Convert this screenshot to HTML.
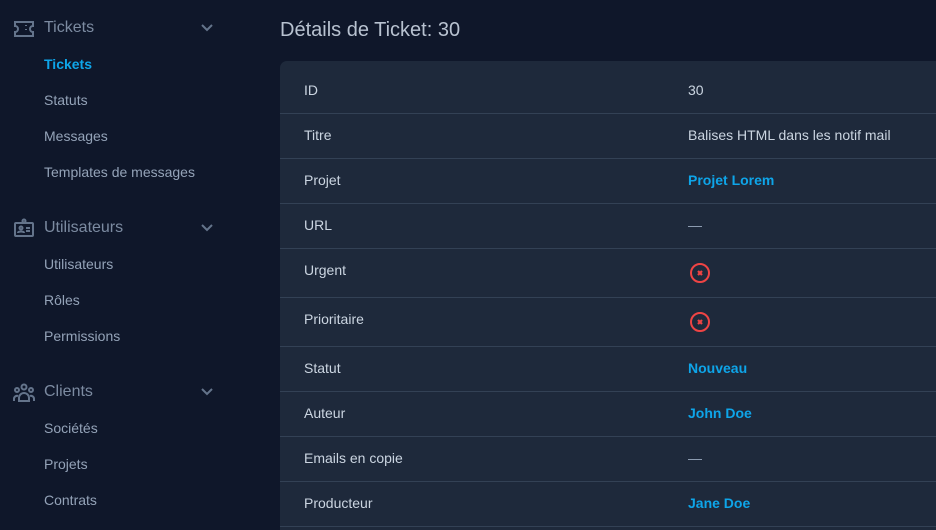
<!DOCTYPE html>
<html><head><meta charset="utf-8"><style>
*{margin:0;padding:0;box-sizing:border-box}
html{overflow:hidden;height:530px}
body{width:936px;height:530px;background:#0f172a;font-family:"Liberation Sans",sans-serif;overflow:hidden;position:relative}
.a{position:absolute;white-space:nowrap}
.h{font-size:16px;color:#7c8ba1;left:44px}
.s{font-size:14px;color:#94a3b8;left:44px}
.act{color:#0ea5e9;font-weight:bold}
.chev{left:200px}
.card{position:absolute;left:280px;top:61px;width:670px;height:469px;background:#1e293b;border-radius:7px 0 0 0}
.ln{position:absolute;left:280px;width:660px;height:1px;background:#334155}
.l{font-size:14px;color:#cbd5e1;left:304px}
.v{font-size:14px;color:#cbd5e1;left:688px}
.b{color:#0ea5e9;font-weight:bold}
</style></head><body>
<svg class="a" style="left:13px;top:19px" width="22" height="20" viewBox="0 0 22 20" fill="none" stroke="#64748b" stroke-width="2"><path d="M2 3h18v4a3 3 0 0 0 0 6v4H2v-4a3 3 0 0 0 0-6z"/><path d="M13 6v1M13 10v1M13 14v0"/></svg>
<div class="a h" style="top:19px">Tickets</div>
<svg class="a chev" style="top:23px" width="14" height="10" viewBox="0 0 14 10"><path d="M2 2l5 5 5-5" stroke="#64748b" stroke-width="2" fill="none"/></svg>
<div class="a s act" style="top:56px">Tickets</div>
<div class="a s" style="top:92px">Statuts</div>
<div class="a s" style="top:128px">Messages</div>
<div class="a s" style="top:164px">Templates de messages</div>
<svg class="a" style="left:13px;top:218px" width="22" height="20" viewBox="0 0 22 20" fill="none" stroke="#64748b" stroke-width="2"><rect x="2" y="5" width="18" height="13" rx="1"/><circle cx="11" cy="3" r="1.5"/><circle cx="8" cy="10" r="1.5"/><path d="M5 15c0-2 6-2 6 0M13 10h4M13 13h4"/></svg>
<div class="a h" style="top:219px">Utilisateurs</div>
<svg class="a chev" style="top:223px" width="14" height="10" viewBox="0 0 14 10"><path d="M2 2l5 5 5-5" stroke="#64748b" stroke-width="2" fill="none"/></svg>
<div class="a s" style="top:256px">Utilisateurs</div>
<div class="a s" style="top:292px">Rôles</div>
<div class="a s" style="top:328px">Permissions</div>
<svg class="a" style="left:12px;top:383px" width="24" height="20" viewBox="0 0 24 20" fill="none" stroke="#64748b" stroke-width="2"><circle cx="12" cy="4" r="2.5"/><circle cx="5" cy="7" r="2"/><circle cx="19" cy="7" r="2"/><path d="M7 18v-3a5 5 0 0 1 10 0v3zM2 18v-2a3 3 0 0 1 4-3M22 18v-2a3 3 0 0 0-4-3"/></svg>
<div class="a h" style="top:383px">Clients</div>
<svg class="a chev" style="top:387px" width="14" height="10" viewBox="0 0 14 10"><path d="M2 2l5 5 5-5" stroke="#64748b" stroke-width="2" fill="none"/></svg>
<div class="a s" style="top:420px">Sociétés</div>
<div class="a s" style="top:456px">Projets</div>
<div class="a s" style="top:492px">Contrats</div>

<div class="a" style="left:280px;top:19px;font-size:20px;color:#b8c2d0">Détails de Ticket: 30</div>
<div class="card"></div>
<div class="ln" style="top:113px"></div><div class="ln" style="top:158px"></div><div class="ln" style="top:203px"></div><div class="ln" style="top:248px"></div><div class="ln" style="top:297px"></div><div class="ln" style="top:346px"></div><div class="ln" style="top:391px"></div><div class="ln" style="top:436px"></div><div class="ln" style="top:481px"></div><div class="ln" style="top:526px"></div>

<div class="a l" style="top:82px">ID</div><div class="a v" style="top:82px">30</div>
<div class="a l" style="top:127px">Titre</div><div class="a v" style="top:127px">Balises HTML dans les notif mail</div>
<div class="a l" style="top:172px">Projet</div><div class="a v b" style="top:172px">Projet Lorem</div>
<div class="a l" style="top:217px">URL</div><div class="a v" style="top:217px;color:#94a3b8">—</div>
<div class="a l" style="top:262px">Urgent</div>
<svg class="a" style="left:689px;top:262px" width="22" height="22" viewBox="0 0 22 22"><circle cx="11" cy="11" r="9" stroke="#ef4444" stroke-width="2" fill="none"/><path d="M9 9l4 4M13 9l-4 4" stroke="#ef4444" stroke-width="2.2"/></svg>
<div class="a l" style="top:311px">Prioritaire</div>
<svg class="a" style="left:689px;top:311px" width="22" height="22" viewBox="0 0 22 22"><circle cx="11" cy="11" r="9" stroke="#ef4444" stroke-width="2" fill="none"/><path d="M9 9l4 4M13 9l-4 4" stroke="#ef4444" stroke-width="2.2"/></svg>
<div class="a l" style="top:360px">Statut</div><div class="a v b" style="top:360px">Nouveau</div>
<div class="a l" style="top:405px">Auteur</div><div class="a v b" style="top:405px">John Doe</div>
<div class="a l" style="top:450px">Emails en copie</div><div class="a v" style="top:450px;color:#94a3b8">—</div>
<div class="a l" style="top:495px">Producteur</div><div class="a v b" style="top:495px">Jane Doe</div>
</body></html>
